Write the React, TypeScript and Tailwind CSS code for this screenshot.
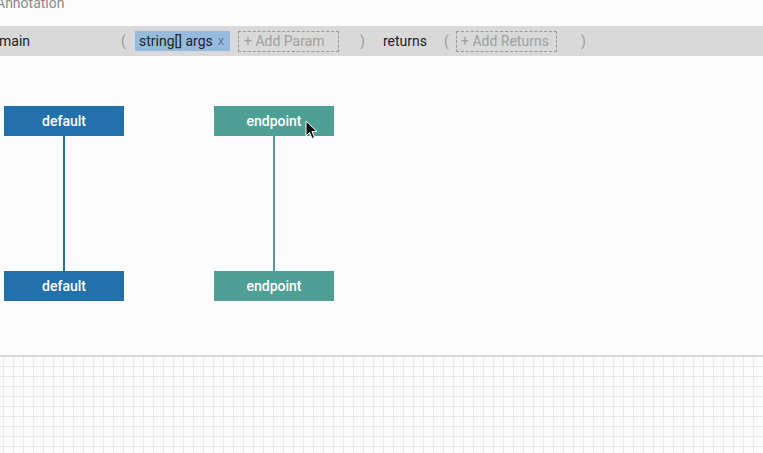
import React from "react";

function Column({ label, color }: { label: string; color: string }) {
  const bg = color === "blue" ? "bg-[#2271ac]" : "bg-[#4ea096]";
  return (
    <div className="flex flex-col items-center w-[120px]">
      <div className={`w-[120px] h-[30px] flex items-center justify-center text-white text-[14px] font-medium ${bg}`}>
        {label}
      </div>
      <div className={`w-[2px] h-[135px] ${bg}`} />
      <div className={`w-[120px] h-[30px] flex items-center justify-center text-white text-[14px] font-medium ${bg}`}>
        {label}
      </div>
    </div>
  );
}

export default function App() {
  return (
    <div
      className="w-[763px] h-[453px] overflow-hidden bg-[#fcfcfc] flex flex-col"
      style={{ fontFamily: "Roboto, 'Liberation Sans', sans-serif" }}
    >
      <div className="h-[26px] shrink-0 relative overflow-hidden">
        <div className="-mt-[7px] -ml-[4px] text-[14px] text-[#8a8a8a] leading-[20px]">Annotation</div>
      </div>
      <div className="h-[30px] shrink-0 bg-[#d9d9d9] flex items-center text-[14px] text-[#222]">
        <div className="w-[122px] -ml-[1px] leading-[20px]">main</div>
        <div className="text-[#9a9a9a] w-[14px]">(</div>
        <div className="h-[20px] w-[95px] bg-[#94bbde] flex items-center pl-[4px]">
          <span>string[] args</span>
          <span className="ml-[5px] text-[#5f7fa0] text-[13px]">x</span>
        </div>
        <div className="ml-[8px] h-[21px] w-[101px] border border-dashed border-[#9a9a9a] flex items-center pl-[5px] text-[#a0a0a0]">
          + Add Param
        </div>
        <div className="ml-[21px] text-[#9a9a9a] w-[23px]">)</div>
        <div className="w-[61px]">returns</div>
        <div className="text-[#9a9a9a] w-[12px]">(</div>
        <div className="h-[21px] w-[101px] border border-dashed border-[#9a9a9a] flex items-center pl-[4px] text-[#a0a0a0]">
          + Add Returns
        </div>
        <div className="ml-[24px] text-[#9a9a9a]">)</div>
      </div>
      <div className="h-[299px] shrink-0 relative">
        <div className="flex gap-[90px] pl-[4px] pt-[50px]">
          <Column label="default" color="blue" />
          <Column label="endpoint" color="green" />
        </div>
        <svg className="absolute left-[305px] top-[64px]" width="14" height="20" viewBox="0 0 14 20">
          <path d="M1 1 L1 16 L4.5 12.5 L7 18.5 L9.5 17.5 L7 11.5 L12 11.5 Z" fill="#111" stroke="#fff" strokeWidth="1" strokeLinejoin="round" />
        </svg>
      </div>
      <div className="h-[2px] shrink-0 bg-[#d9d9d9]" />
      <div
        className="flex-1 bg-[#fcfcfc]"
        style={{
          backgroundImage:
            "linear-gradient(to right, #e9e9e9 1px, transparent 1px), linear-gradient(to bottom, #e9e9e9 1px, transparent 1px)",
          backgroundSize: "10px 10px",
          backgroundPosition: "3px 9px",
        }}
      />
    </div>
  );
}
